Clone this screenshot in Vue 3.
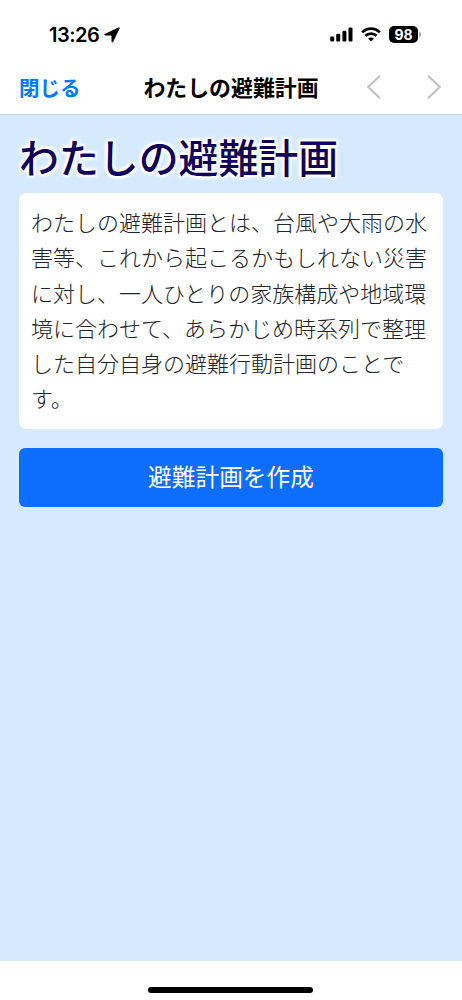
<template>
  <div class="screen">
    <div class="status-bar">
      <div class="clock">
        <span>13:26</span>
        <svg class="location" viewBox="0 0 16 16">
          <path d="M14.4 0.4 L0.8 6.9 Q-0.3 7.9 1.2 8.5 H6.7 Q7.5 8.5 7.5 9.3 V14.6 Q8.1 16.1 9.2 14.7 L15.6 1.6 Q15.9 0.1 14.4 0.4 Z" />
        </svg>
      </div>
      <div class="indicators">
        <svg class="signal" viewBox="0 0 23 15">
          <rect
            v-for="bar in bars"
            :key="bar.x"
            :x="bar.x"
            :y="14.5 - bar.height"
            width="4"
            :height="bar.height"
            rx="1.1"
          />
        </svg>
        <svg class="wifi" viewBox="0 0 20 15">
          <path d="M1.2 5.4 C6.2 0.4 13.8 0.4 18.8 5.4" />
          <path d="M4.5 8.8 C7.6 5.8 12.4 5.8 15.5 8.8" />
          <path class="dot" d="M10 14.4 L7.1 11.5 C8.7 10 11.3 10 12.9 11.5 Z" />
        </svg>
        <div class="battery">
          <span class="level">{{ battery }}</span>
          <span class="cap"></span>
        </div>
      </div>
    </div>

    <div class="nav-bar">
      <button class="close" type="button">閉じる</button>
      <div class="nav-title">{{ title }}</div>
      <div class="nav-arrows">
        <svg viewBox="0 0 14 24"><path d="M13 0.8 L1.2 12 L13 23.2" /></svg>
        <svg viewBox="0 0 14 24"><path d="M1 0.8 L12.8 12 L1 23.2" /></svg>
      </div>
    </div>

    <main class="content">
      <h1>{{ title }}</h1>
      <p class="description">{{ description }}</p>
      <button class="create-btn" type="button">避難計画を作成</button>
    </main>

    <div class="home-area">
      <div class="home-indicator"></div>
    </div>
  </div>
</template>

<script setup>
import { ref } from 'vue';

const title = 'わたしの避難計画';
const description =
  'わたしの避難計画とは、台風や大雨の水害等、これから起こるかもしれない災害に対し、一人ひとりの家族構成や地域環境に合わせて、あらかじめ時系列で整理した自分自身の避難行動計画のことです。';

const battery = ref(98);

const bars = [
  { x: 0.2, height: 5 },
  { x: 6.2, height: 7.8 },
  { x: 12.4, height: 10.7 },
  { x: 18.5, height: 13.9 }
];
</script>

<style>
body {
  margin: 0;
}
</style>

<style scoped>
.screen {
  display: flex;
  flex-direction: column;
  width: 462px;
  height: 1000px;
  overflow: hidden;
  background-color: #fff;
  font-family: "Noto Sans CJK JP", sans-serif;
}

button {
  border: 0;
  padding: 0;
  background: none;
  font-family: inherit;
}

.status-bar {
  display: flex;
  justify-content: space-between;
  align-items: center;
  box-sizing: border-box;
  height: 60px;
  padding: 9px 41px 0 49px;
  font-family: Inter, sans-serif;
}

.clock {
  display: flex;
  align-items: center;
  gap: 5px;
  font-size: 20px;
  font-weight: 600;
  letter-spacing: -0.5px;
}

.location {
  width: 16px;
  height: 16px;
}

.indicators {
  display: flex;
  align-items: center;
}

.signal {
  width: 23px;
  height: 15px;
}

.wifi {
  width: 20px;
  height: 15px;
  margin-left: 8px;
  fill: none;
  stroke: #000;
  stroke-width: 2.7;
}

.wifi .dot {
  fill: #000;
  stroke: none;
}

.battery {
  display: flex;
  align-items: center;
  margin-left: 8px;
}

.level {
  width: 29px;
  height: 17px;
  border-radius: 5px;
  background-color: #000;
  color: #fff;
  font-size: 14px;
  font-weight: 700;
  line-height: 17px;
  text-align: center;
}

.cap {
  width: 2px;
  height: 5px;
  margin-left: 1px;
  border-radius: 0 2px 2px 0;
  background-color: #aaa;
}

.nav-bar {
  display: grid;
  grid-template-columns: 1fr auto 1fr;
  align-items: center;
  box-sizing: border-box;
  height: 55px;
  padding: 0 21px 0 19px;
  border-bottom: 1px solid #c8d0d8;
}

.close {
  justify-self: start;
  padding-bottom: 1px;
  color: #007aff;
  font-size: 20.5px;
  font-weight: 700;
}

.nav-title {
  padding: 0 0 2px 2px;
  font-size: 21.9px;
  font-weight: 700;
}

.nav-arrows {
  display: flex;
  justify-self: end;
  gap: 46px;
}

.nav-arrows svg {
  width: 14px;
  height: 24px;
  fill: none;
  stroke: #bfbfbf;
  stroke-width: 2;
}

.content {
  flex: 1;
  padding: 17px 19px 0;
  background-color: #d6eaff;
}

h1 {
  margin: 0 0 13px;
  color: #10005c;
  font-size: 39.9px;
  font-weight: 500;
  line-height: 48px;
  text-shadow:
    0 0 2px #fff,
    0 0 3px #fff,
    2px 2px 3px #fff,
    -2px 2px 3px #fff,
    2px -2px 3px #fff,
    -2px -2px 3px #fff;
}

.description {
  box-sizing: border-box;
  height: 236px;
  margin: 0 0 19px;
  padding: 11px 12px;
  border-radius: 7px;
  background-color: #fff;
  color: #212529;
  font-size: 22px;
  font-weight: 300;
  line-height: 35.3px;
}

.create-btn {
  display: block;
  width: 100%;
  height: 59px;
  padding-bottom: 3px;
  border-radius: 6px;
  background-color: #0d6efd;
  color: #fff;
  font-size: 23.7px;
  font-weight: 400;
}

.home-area {
  display: flex;
  justify-content: center;
  align-items: flex-end;
  box-sizing: border-box;
  height: 39px;
  padding: 0 1px 7px 0;
}

.home-indicator {
  width: 165px;
  height: 6px;
  border-radius: 3px;
  background-color: #000;
}
</style>
